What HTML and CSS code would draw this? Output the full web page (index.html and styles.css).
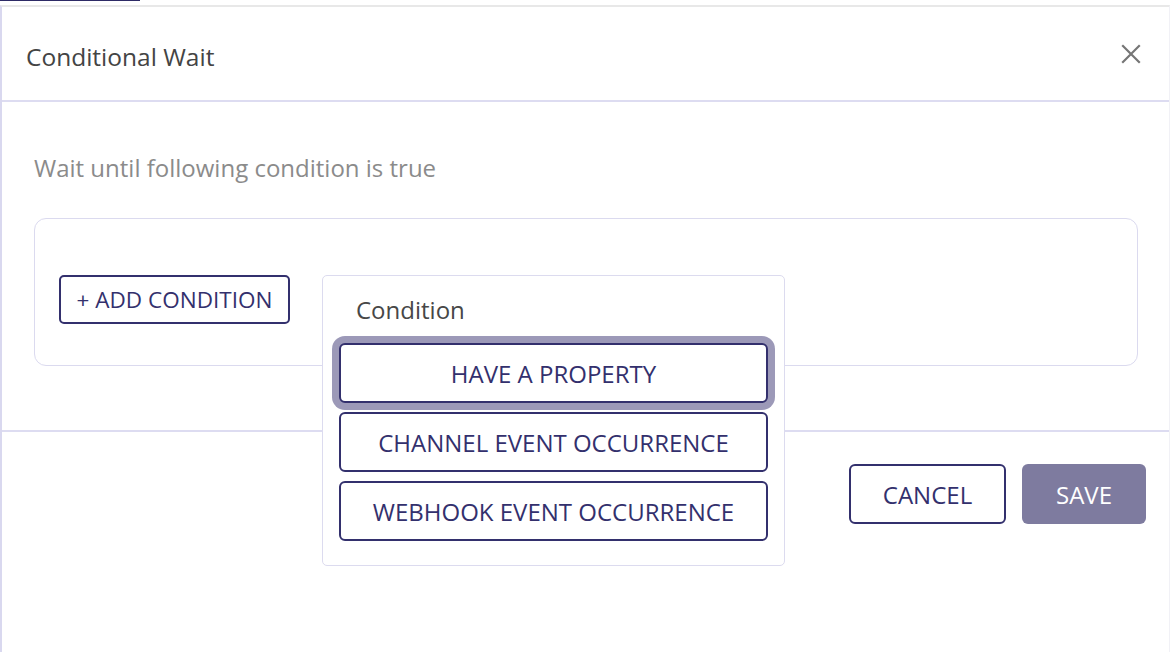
FILE: index.html
```html
<!DOCTYPE html>
<html lang="en">
<head>
<meta charset="utf-8">
<title>Conditional Wait</title>
<link rel="stylesheet" href="styles.css">
</head>
<body>
<div class="tab-indicator"></div>
<div class="modal">
  <header class="modal-header">
    <h1 class="modal-title">Conditional Wait</h1>
    <button class="close-btn" aria-label="Close">
      <svg width="20" height="20" viewBox="0 0 20 20"><path d="M2 2 L18 18 M18 2 L2 18" stroke="#767676" stroke-width="2.2" fill="none" stroke-linecap="square"/></svg>
    </button>
  </header>
  <section class="modal-body">
    <p class="subtitle">Wait until following condition is true</p>
    <div class="condition-box">
      <button class="btn btn-outline add-btn">+ ADD CONDITION</button>
      <div class="popover">
        <div class="popover-label">Condition</div>
        <div class="popover-options">
          <button class="btn btn-outline option focused">HAVE A PROPERTY</button>
          <button class="btn btn-outline option">CHANNEL EVENT OCCURRENCE</button>
          <button class="btn btn-outline option">WEBHOOK EVENT OCCURRENCE</button>
        </div>
      </div>
    </div>
  </section>
  <footer class="modal-footer">
    <button class="btn btn-outline cancel-btn">CANCEL</button>
    <button class="btn save-btn">SAVE</button>
  </footer>
</div>
</body>
</html>
```

FILE: styles.css
```css
* { box-sizing: border-box; }

html, body {
  margin: 0;
  padding: 0;
  background: #ffffff;
  font-family: "Open Sans", "Noto Sans", sans-serif;
}

body {
  height: 652px;
  overflow: hidden;
}

.tab-indicator {
  width: 140px;
  height: 1px;
  background: #2e2b66;
}

.modal {
  margin-top: 4px;
  border-top: 2px solid #e8e8e8;
  border-left: 2px solid #d9d8ef;
  border-right: 1px solid #f1f1f6;
  height: 647px;
  display: flex;
  flex-direction: column;
}

.modal-header {
  height: 95px;
  border-bottom: 2px solid #dddcf1;
  display: flex;
  align-items: center;
  justify-content: space-between;
  padding: 6px 28px 0 24px;
}

.modal-title {
  margin: 0;
  font-weight: 400;
  font-size: 24.5px;
  color: #444444;
}

.close-btn {
  border: 0;
  background: none;
  padding: 0;
  width: 20px;
  height: 20px;
  display: flex;
  margin-bottom: 5px;
}

.modal-body {
  padding: 50px 31px 64px 32px;
  border-bottom: 2px solid #dddcf1;
}

.subtitle {
  margin: 0 0 34px 0;
  font-size: 24px;
  line-height: 32px;
  color: #8b8b8b;
}

.condition-box {
  position: relative;
  height: 148px;
  border: 1px solid #dbdaef;
  border-radius: 12px;
  padding: 56px 24px 0 24px;
}

.btn {
  font-family: "Open Sans", "Noto Sans", sans-serif;
  font-size: 24px;
  font-weight: 400;
  cursor: pointer;
  display: flex;
  align-items: center;
  justify-content: center;
  border-radius: 6px;
  padding: 0;
}

.btn-outline {
  background: #ffffff;
  border: 2px solid #33306d;
  color: #33306d;
}

.add-btn {
  width: 231px;
  height: 49px;
  border-radius: 5px;
  font-size: 22.5px;
}

.popover {
  position: absolute;
  left: 287px;
  top: 56px;
  width: 463px;
  height: 291px;
  background: #ffffff;
  border: 1px solid #dcdbef;
  border-radius: 5px;
  padding: 0 16px 0 16px;
  z-index: 2;
}

.popover-label {
  height: 67px;
  display: flex;
  align-items: center;
  padding: 0 0 0 17px;
  font-size: 24px;
  color: #474747;
}

.popover-options {
  display: flex;
  flex-direction: column;
  gap: 9px;
}

.option {
  width: 429px;
  height: 60px;
}

.option.focused {
  box-shadow: 0 0 0 7px #9c99b8;
}

.modal-footer {
  display: flex;
  justify-content: flex-end;
  gap: 16px;
  padding: 32px 23px 0 0;
}

.cancel-btn {
  width: 157px;
  height: 60px;
}

.save-btn {
  width: 124px;
  height: 60px;
  background: #7e7b9f;
  border: 0;
  color: #ffffff;
}
```
